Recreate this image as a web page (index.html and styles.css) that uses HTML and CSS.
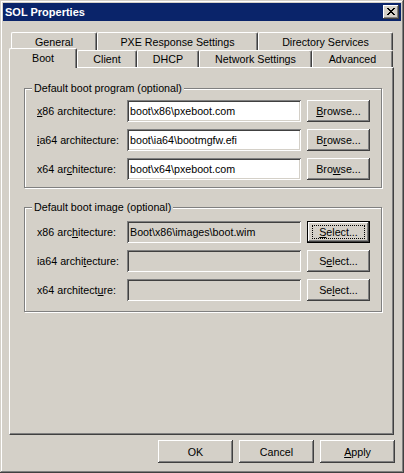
FILE: index.html
```html
<!DOCTYPE html>
<html lang="en">
  <head>
    <meta charset="UTF-8" />
    <title>SOL Properties</title>
    <link rel="stylesheet" href="styles.css">
  </head>
  <body>
    <div class="window">
      <!-- Title bar -->
      <div class="titlebar">
        <span class="title">SOL Properties</span>
        <button class="close-btn" aria-label="Close">
          <svg width="8" height="7" viewBox="0 0 8 7" shape-rendering="crispEdges">
            <path fill="#000" d="M0 0h2v1H0zM6 0h2v1H6zM1 1h2v1H1zM5 1h2v1H5zM2 2h4v1H2zM3 3h2v1H3zM2 4h4v1H2zM1 5h2v1H1zM5 5h2v1H5zM0 6h2v1H0zM6 6h2v1H6z"/>
          </svg>
        </button>
      </div>

      <!-- Tabs -->
      <div class="tabs">
        <div class="tab-row back">
          <div class="tab w-general">General</div>
          <div class="tab w-pxe">PXE Response Settings</div>
          <div class="tab w-dir">Directory Services</div>
        </div>
        <div class="tab-row front">
          <div class="tab selected w-boot">Boot</div>
          <div class="tab w-client">Client</div>
          <div class="tab w-dhcp">DHCP</div>
          <div class="tab w-net">Network Settings</div>
          <div class="tab w-adv">Advanced</div>
        </div>
      </div>

      <!-- Tab page -->
      <div class="panel">
        <div class="group group-program">
          <span class="legend">Default boot program (optional)</span>
          <div class="rows">
            <div class="row">
              <label class="label"><u>x</u>86 architecture:</label>
              <input class="field" type="text" value="boot\x86\pxeboot.com" readonly />
              <button class="btn small"><u>B</u>rowse...</button>
            </div>
            <div class="row">
              <label class="label"><u>i</u>a64 architecture:</label>
              <input class="field" type="text" value="boot\ia64\bootmgfw.efi" readonly />
              <button class="btn small">B<u>r</u>owse...</button>
            </div>
            <div class="row">
              <label class="label">x64 ar<u>c</u>hitecture:</label>
              <input class="field" type="text" value="boot\x64\pxeboot.com" readonly />
              <button class="btn small">Bro<u>w</u>se...</button>
            </div>
          </div>
        </div>

        <div class="group group-image">
          <span class="legend">Default boot image (optional)</span>
          <div class="rows">
            <div class="row">
              <label class="label">x86 arc<u>h</u>itecture:</label>
              <input class="field disabled" type="text" value="Boot\x86\images\boot.wim" readonly />
              <button class="btn small focused"><span class="focus-rect"><u>S</u>elect...</span></button>
            </div>
            <div class="row">
              <label class="label">ia64 archi<u>t</u>ecture:</label>
              <input class="field disabled" type="text" value="" readonly />
              <button class="btn small">S<u>e</u>lect...</button>
            </div>
            <div class="row">
              <label class="label">x64 architect<u>u</u>re:</label>
              <input class="field disabled" type="text" value="" readonly />
              <button class="btn small">Se<u>l</u>ect...</button>
            </div>
          </div>
        </div>
      </div>

      <!-- Dialog buttons -->
      <div class="actions">
        <button class="btn wide">OK</button>
        <button class="btn wide">Cancel</button>
        <button class="btn wide"><u>A</u>pply</button>
      </div>
    </div>
  </body>
</html>
```

FILE: styles.css
```css
/* Reset */
* {
  margin: 0;
  padding: 0;
  box-sizing: border-box;
}

body {
  background: #d4d0c8;
  font-family: "Liberation Sans", Arial, sans-serif;
  font-size: 10.7px;
  color: #000;
}

u {
  text-underline-offset: 1px;
}

/* Window frame */
.window {
  width: 404px;
  height: 473px;
  padding: 3px;
  background: #d4d0c8;
  display: flex;
  flex-direction: column;
  box-shadow: inset -1px -1px #404040, inset 1px 1px #d4d0c8,
    inset -2px -2px #808080, inset 2px 2px #fff;
}

/* Title bar */
.titlebar {
  height: 18px;
  background: #0a246a;
  display: flex;
  align-items: center;
  justify-content: space-between;
  padding: 0 2px 0 2px;
}

.title {
  color: #fff;
  font-weight: bold;
  font-size: 11px;
}

.close-btn {
  width: 16px;
  height: 14px;
  border: none;
  background: #d4d0c8;
  display: flex;
  align-items: center;
  justify-content: center;
  padding: 0 1px 1px 0;
  box-shadow: inset -1px -1px #404040, inset 1px 1px #fff,
    inset -2px -2px #808080;
}

.close-btn svg {
  display: block;
}

/* Tabs */
.tabs {
  margin: 11px 0 0 6px;
}

.tab-row {
  display: flex;
}

.tab-row.back {
  padding-left: 2px;
  height: 18px;
}

.tab-row.front {
  height: 17px;
  align-items: flex-end;
}

.tab {
  height: 100%;
  display: flex;
  align-items: center;
  justify-content: center;
  background: #d4d0c8;
  border-top: 1px solid #fff;
  border-left: 1px solid #fff;
  border-right: 1px solid #404040;
  border-radius: 2px 2px 0 0;
  box-shadow: inset -1px 0 #808080;
  white-space: nowrap;
}

.tab-row.front .tab {
  padding-bottom: 1px;
}

.tab.selected {
  position: relative;
  z-index: 1;
  height: 20px;
  margin-bottom: -1px;
  padding-bottom: 4px;
}

.w-general { width: 86px; }
.w-pxe { width: 161px; }
.w-dir { width: 135px; }
.w-boot { width: 68px; }
.w-client { width: 60px; }
.w-dhcp { width: 62px; }
.w-net { width: 113px; }
.w-adv { width: 81px; }

/* Tab page */
.panel {
  margin-left: 6px;
  width: 385px;
  height: 368px;
  border-top: 1px solid #fff;
  border-left: 1px solid #fff;
  border-right: 1px solid #404040;
  border-bottom: 1px solid #404040;
  box-shadow: inset -1px -1px #808080;
  padding-left: 14px;
}

/* Group boxes */
.group {
  width: 358px;
  border: 1px solid #808080;
  box-shadow: inset 1px 1px #fff, 1px 1px #fff;
  display: flex;
  flex-direction: column;
  align-items: flex-start;
}

.group-program {
  margin-top: 20px;
  padding-bottom: 7px;
}

.group-image {
  margin-top: 19px;
  padding-bottom: 10px;
}

.legend {
  display: inline-block;
  margin: -7px 0 0 7px;
  padding: 0 2px;
  line-height: 13px;
  background: #d4d0c8;
}

.rows {
  display: flex;
  flex-direction: column;
  gap: 7px;
  padding-left: 12px;
}

.group-program .rows {
  margin-top: 5px;
}

.group-image .rows {
  margin-top: 7px;
}

.row {
  display: flex;
  align-items: center;
}

.label {
  width: 90px;
  white-space: nowrap;
}

/* Text fields */
.field {
  width: 174px;
  height: 22px;
  border: none;
  outline: none;
  background: #fff;
  font-family: "Liberation Sans", Arial, sans-serif;
  font-size: 10.7px;
  color: #000;
  padding: 0 0 1px 3px;
  box-shadow: inset 1px 1px #808080, inset -1px -1px #fff,
    inset 2px 2px #404040, inset -2px -2px #d4d0c8;
}

.field.disabled {
  background: #d4d0c8;
}

/* Buttons */
.btn {
  border: none;
  background: #d4d0c8;
  font-family: "Liberation Sans", Arial, sans-serif;
  font-size: 10.7px;
  color: #000;
  display: flex;
  align-items: center;
  justify-content: center;
  box-shadow: inset -1px -1px #404040, inset 1px 1px #fff,
    inset -2px -2px #808080;
}

.btn.small {
  width: 63px;
  height: 22px;
  margin-left: 6px;
}

.btn.focused {
  box-shadow: inset 0 0 0 1px #000, inset -2px -2px #404040,
    inset 2px 2px #fff, inset -3px -3px #808080;
}

.focus-rect {
  display: flex;
  align-items: center;
  justify-content: center;
  width: 53px;
  height: 14px;
  border: 1px dotted #000;
}

.actions {
  display: flex;
  justify-content: flex-end;
  gap: 6px;
  margin: 5px 6px 0 0;
}

.btn.wide {
  width: 75px;
  height: 23px;
}
```
